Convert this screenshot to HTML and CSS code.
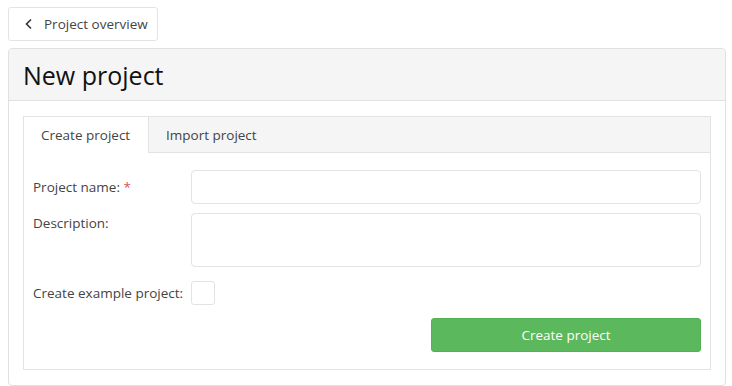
FILE: index.html
```html
<!DOCTYPE html>
<html lang="en">
  <head>
    <meta charset="UTF-8" />
    <title>New project</title>
    <link rel="stylesheet" href="styles.css">
  </head>
  <body>
    <div class="page">
      <a href="javascript:;" class="back">
        <svg class="chev" width="10" height="12" viewBox="0 0 10 12">
          <path d="M7 1.5 L2.5 6 L7 10.5" fill="none" stroke="#333" stroke-width="1.6"/>
        </svg>
        <span>Project overview</span>
      </a>
      <div class="panel">
        <div class="panel-head">
          <h1>New project</h1>
        </div>
        <div class="panel-body">
          <div class="tabs">
            <div class="tab-bar">
              <a href="javascript:;" class="tab active">Create project</a>
              <a href="javascript:;" class="tab">Import project</a>
            </div>
            <form class="form">
              <div class="row">
                <label class="lbl">Project name: <span class="req">*</span></label>
                <input type="text" class="field" />
              </div>
              <div class="row top">
                <label class="lbl">Description:</label>
                <textarea class="field area"></textarea>
              </div>
              <div class="row">
                <label class="lbl">Create example project:</label>
                <span class="check"></span>
              </div>
              <div class="actions">
                <button type="button" class="btn">Create project</button>
              </div>
            </form>
          </div>
        </div>
      </div>
    </div>
  </body>
</html>
```

FILE: styles.css
```css
* {
  margin: 0px;
  padding: 0px;
  box-sizing: border-box;
  text-decoration: none;
}
body {
  font-family: "Open Sans", "Noto Sans", sans-serif;
  font-size: 13.5px;
  color: #444;
  background: #fff;
}
.page {
  padding: 7px 6px 0 8px;
}
.back {
  display: inline-flex;
  align-items: center;
  height: 34px;
  width: 150px;
  padding-left: 15px;
  border: 1px solid #e3e3e3;
  border-radius: 3px;
  color: #444;
}
.chev {
  margin-right: 10px;
}
.panel {
  margin-top: 7px;
  border: 1px solid #e0e0e0;
  border-radius: 4px;
  height: 338px;
}
.panel-head {
  height: 52px;
  background: #f5f5f5;
  border-bottom: 1px solid #e0e0e0;
  padding: 0 14px;
  display: flex;
  align-items: center;
  border-radius: 4px 4px 0 0;
}
h1 {
  font-size: 25px;
  font-weight: 400;
  color: #111;
}
.panel-body {
  padding: 15px 14px;
}
.tabs {
  border: 1px solid #e3e3e3;
}
.tab-bar {
  display: flex;
  height: 36px;
  background: #f5f5f5;
  border-bottom: 1px solid #e3e3e3;
}
.tab {
  display: flex;
  align-items: center;
  padding: 0 17px;
  color: #444;
}
.tab.active {
  width: 125px;
  background: #fff;
  border-right: 1px solid #e3e3e3;
  margin-bottom: -1px;
}
.form {
  padding: 17px 9px 17px 9px;
}
.row {
  display: flex;
  align-items: center;
  margin-bottom: 9px;
}
.row.top {
  align-items: flex-start;
  margin-bottom: 14px;
}
.row.top .lbl {
  padding-top: 1px;
}
.lbl {
  width: 158px;
  flex-shrink: 0;
}
.req {
  color: #d9534f;
}
.field {
  flex: 1;
  height: 34px;
  border: 1px solid #e3e3e3;
  border-radius: 4px;
  font: inherit;
  outline: none;
}
.area {
  height: 54px;
  resize: none;
}
.check {
  width: 24px;
  height: 24px;
  border: 1px solid #e3e3e3;
  border-radius: 3px;
}
.actions {
  display: flex;
  justify-content: flex-end;
  margin-top: 13px;
}
.btn {
  width: 270px;
  height: 34px;
  background: #5cb85c;
  border: 1px solid #54b054;
  border-radius: 3px;
  color: #fff;
  font: inherit;
  font-size: 13.5px;
}
```
